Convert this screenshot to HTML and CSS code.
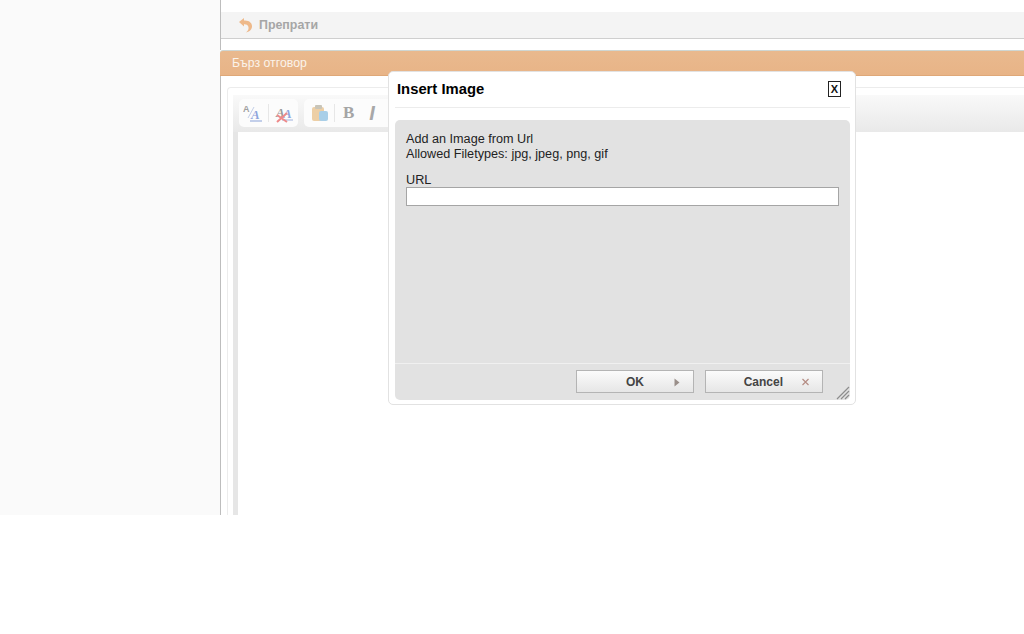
FILE: index.html
```html
<!DOCTYPE html>
<html lang="bg">
<head>
<meta charset="utf-8">
<title>Insert Image</title>
<link rel="stylesheet" href="styles.css">
</head>
<body>
<div class="page">
  <aside class="sidebar"></aside>
  <main class="main">
    <div class="actions">
      <svg class="reply-icon" width="16" height="16" viewBox="0 0 16 16"><path d="M1 5 L6 1 L6 3.5 C11 3 14.5 6 14 10 C13.6 13 11 15 8 15.5 C10.5 13.5 11 11.5 10.3 9.5 C9.6 7.7 8 7 6 7.2 L6 9.5 Z" fill="#eeb98a"/></svg>
      <span class="reply-label">Препрати</span>
    </div>
    <section class="panel">
      <header class="panel-head">Бърз отговор</header>
      <div class="panel-body">
        <div class="editor">
          <div class="toolbar">
            <div class="tool-group tool-group-first">
              <svg class="tool" width="20" height="20" viewBox="0 0 20 20"><text x="0" y="9" class="tool-a-small">A</text><path d="M5 15 L11 4" stroke="#c3cfe8" stroke-width="1"/><text x="8" y="16" class="tool-a-blue">A</text><path d="M7 18 H19" stroke="#9db0dd" stroke-width="1.2"/></svg>
              <span class="sep"></span>
              <svg class="tool" width="20" height="20" viewBox="0 0 20 20"><text x="1" y="14" class="tool-a-gray">A</text><text x="8" y="15" class="tool-a-blue">A</text><path d="M7 17 H18" stroke="#9db0dd" stroke-width="1"/><path d="M2 19 L12 10 M2 12 L12 19" stroke="#ee8a8a" stroke-width="2"/></svg>
            </div>
            <div class="tool-group tool-group-second">
              <svg class="tool" width="20" height="20" viewBox="0 0 20 20"><rect x="2" y="4" width="12" height="14" rx="2" fill="#edcfa6"/><rect x="5" y="2" width="7" height="4" rx="1" fill="#c9c5b8"/><rect x="9" y="8" width="9" height="10" rx="2" fill="#a9cfe8"/></svg>
              <span class="sep"></span>
              <span class="tool-b">B</span>
              <span class="tool-i">I</span>
            </div>
          </div>
          <div class="editor-area"></div>
        </div>
      </div>
    </section>
  </main>
</div>

<div class="dialog">
  <div class="dialog-head">
    <h1 class="dialog-title">Insert Image</h1>
    <button class="dialog-close" type="button">X</button>
  </div>
  <div class="dialog-box">
    <div class="dialog-content">
      <p class="dialog-text">Add an Image from Url<br>Allowed Filetypes: jpg, jpeg, png, gif</p>
      <label class="field-label" for="url">URL</label>
      <input class="field-input" id="url" type="text">
    </div>
    <div class="dialog-foot">
      <button class="btn btn-ok" type="button"><span class="btn-label">OK</span><svg width="6" height="9" viewBox="0 0 6 9"><path d="M0.5 0.5 L5.5 4.5 L0.5 8.5 Z" fill="#9a8f8a"/></svg></button>
      <button class="btn btn-cancel" type="button"><span class="btn-label">Cancel</span><svg width="9" height="8" viewBox="0 0 9 8"><path d="M1.5 1 L7.5 7 M7.5 1 L1.5 7" stroke="#b58d85" stroke-width="1.2"/></svg></button>
      <svg class="grip" width="14" height="14" viewBox="0 0 14 14"><path d="M1 13 L13 1 M5 13 L13 5 M9 13 L13 9" stroke="#8d8d8d" stroke-width="1.2"/></svg>
    </div>
  </div>
</div>
</body>
</html>
```

FILE: styles.css
```css
* { box-sizing: border-box; }
html, body { margin: 0; padding: 0; background: #fff; }
body { font-family: "Liberation Sans", Arial, sans-serif; height: 634px; overflow: hidden; position: relative; }

.page { display: flex; height: 515px; overflow: hidden; }
.sidebar { width: 220px; flex: none; background: #fafafa; }
.main { flex: 1; border-left: 1px solid #bdbdbd; padding-top: 12px; min-width: 0; }

.actions { height: 27px; background: #f4f4f4; border-bottom: 1px solid #cfcfcf; display: flex; align-items: center; padding-left: 17px; gap: 5px; }
.reply-icon { flex: none; }
.reply-label { font-size: 12.4px; font-weight: bold; color: #a6a6a6; }

.panel { margin: 11px 0 0 -1px; background: #fff; }
.panel-head { height: 26px; background: linear-gradient(#e9b98e, #e8b487); border-top: 1px solid #cfd6d2; border-bottom: 1px solid #dfa878; border-radius: 3px 0 0 0; color: #fbf3ea; font-size: 12.3px; line-height: 24px; padding-left: 12px; }
.panel-body { padding: 11px 0 0 7px; border-left: 1px solid #bdbdbd; }
.editor { border: 1px solid #ececec; border-right: 0; border-radius: 4px 0 0 0; padding: 7px 0 0 5px; background: #fff; margin-left: -1px; }
.toolbar { height: 37px; display: flex; gap: 6px; align-items: flex-start; padding: 4px 0 0 6px; background: linear-gradient(#f9f9f9, #e9e9e9); }
.tool-group { height: 28px; background: #fcfcfc; border-radius: 5px; display: flex; align-items: center; }
.tool-group-first { width: 59px; padding-left: 4px; gap: 5px; }
.tool-group-first .sep { margin-right: 1px; }
.tool-group-second { width: 90px; padding-left: 6px; gap: 4px; }
.tool { flex: none; }
.sep { width: 1px; height: 18px; background: #e7e7e7; flex: none; }
.tool-a-small { font: bold 9px "Liberation Sans", sans-serif; fill: #a0a0a0; }
.tool-a-blue { font: bold italic 13px "Liberation Serif", serif; fill: #8fa5dc; }
.tool-a-gray { font: bold italic 13px "Liberation Serif", serif; fill: #9a9a9a; }
.tool-b { font: bold 17px "Liberation Serif", serif; color: #a5a5a5; margin-left: 4px; }
.tool-i { font: bold italic 20px "Liberation Sans", sans-serif; color: #a8a8a8; margin-left: 11px; }
.editor-area { height: 400px; background: #fff; border-left: 5px solid #e6e6e6; }

.dialog { position: absolute; left: 388px; top: 71px; width: 468px; height: 334px; background: #fff; border: 1px solid #e2e2e2; border-radius: 5px; padding: 0 5px 4px 6px; display: flex; flex-direction: column; }
.dialog-head { height: 36px; flex: none; margin: 0 0 12px 0; border-bottom: 1px solid #ececec; display: flex; align-items: center; justify-content: space-between; padding: 0 9px 2px 2px; }
.dialog-title { margin: 0; font-size: 14.8px; font-weight: bold; color: #000; }
.dialog-close { width: 13px; height: 16px; padding: 0; border: 1px solid #222; background: #fff; font: bold 11px "Liberation Sans", sans-serif; color: #111; display: flex; align-items: center; justify-content: center; }
.dialog-box { flex: 1; background: #e2e2e2; border-radius: 5px; display: flex; flex-direction: column; min-height: 0; }
.dialog-content { flex: 1; padding: 12px 11px 0 11px; display: flex; flex-direction: column; align-items: stretch; }
.dialog-text { margin: 0 0 11px; font-size: 12.65px; line-height: 15px; color: #222; }
.field-label { font-size: 12.65px; line-height: 14px; color: #222; }
.field-input { height: 19px; width: 100%; border: 1px solid #a5a5a5; background: #fff; padding: 0; margin: 0; }
.dialog-foot { height: 37px; flex: none; border-top: 1px solid #f0f0f0; display: flex; justify-content: flex-end; gap: 11px; padding: 6px 27px 0 0; position: relative; }
.btn { width: 118px; height: 23px; border: 1px solid #b4b4b4; background: linear-gradient(#fbfbfb, #e6e6e6); display: flex; align-items: center; justify-content: flex-end; padding: 1px 0 0; font: bold 12px "Liberation Sans", sans-serif; color: #444; }
.btn-ok { padding-right: 13px; }
.btn-ok .btn-label { margin-right: 30px; }
.btn-cancel { padding-right: 12px; }
.btn-cancel .btn-label { margin-right: 18px; }
.grip { position: absolute; right: 0; bottom: 0; }
```
